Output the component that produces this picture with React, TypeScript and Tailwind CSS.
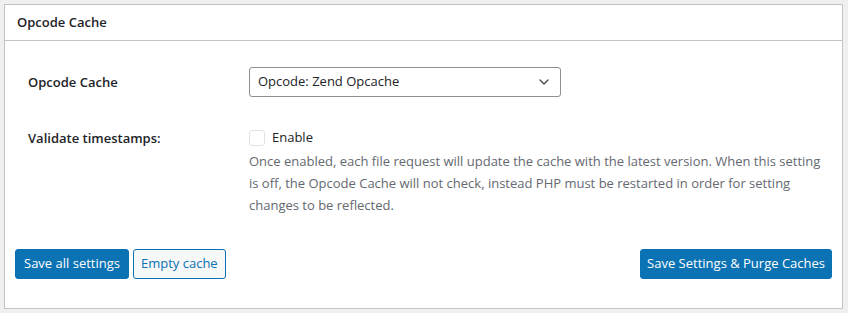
import React from "react";

export default function App() {
  return (
    <div
      className="w-[848px] h-[313px] bg-[#f0f0f1] pt-[4px] pl-[4px] pr-[5px] text-[#1d2327]"
      style={{ fontFamily: '"Open Sans", "Noto Sans", sans-serif' }}
    >
      <div className="h-[305px] bg-white border border-[#c3c4c7] flex flex-col">
        <div className="h-[36px] border-b border-[#c3c4c7] flex items-center pl-[12px] text-[13px] font-semibold">
          Opcode Cache
        </div>
        <div className="pl-[23px] pt-[26px] flex flex-col">
          <div className="flex items-center h-[30px]">
            <div className="w-[221px] text-[13px] font-semibold pt-[2px]">Opcode Cache</div>
            <div className="w-[312px] h-[30px] border border-[#8c8f94] rounded-[3px] flex items-center justify-between pl-[8px] pr-[8px] text-[13px]">
              <span>Opcode: Zend Opcache</span>
              <svg width="16" height="16" viewBox="0 0 20 20" fill="none">
                <path d="M5 7.5l5 5 5-5" stroke="#50575e" strokeWidth="1.8" strokeLinecap="round" strokeLinejoin="round" />
              </svg>
            </div>
          </div>
          <div className="flex mt-[30px]">
            <div className="w-[221px] text-[13px] font-semibold leading-[22px]">Validate timestamps:</div>
            <div className="flex-1 pr-[10px]">
              <div className="flex items-center h-[22px] gap-[7px]">
                <span className="w-[16px] h-[16px] border border-[#e2e2e4] rounded-[3px] bg-white" />
                <span className="text-[13px]">Enable</span>
              </div>
              <p className="text-[13px] leading-[22px] text-[#646970] mt-[1px]">
                Once enabled, each file request will update the cache with the latest version. When this setting is off, the Opcode Cache will not check, instead PHP must be restarted in order for setting changes to be reflected.
              </p>
            </div>
          </div>
        </div>
        <div className="flex items-center justify-between px-[10px] mt-[33px]">
          <div className="flex gap-[4px]">
            <button className="h-[30px] px-[8px] rounded-[3px] bg-[#0b72b4] text-white text-[13px] border border-[#0b72b4]">
              Save all settings
            </button>
            <button className="h-[30px] px-[7px] rounded-[3px] bg-[#f6f7f7] text-[#0b72b4] text-[13px] border border-[#0b72b4]">
              Empty cache
            </button>
          </div>
          <button className="h-[30px] px-[6px] rounded-[3px] bg-[#0b72b4] text-white text-[13px] border border-[#0b72b4]">
            Save Settings &amp; Purge Caches
          </button>
        </div>
      </div>
    </div>
  );
}
